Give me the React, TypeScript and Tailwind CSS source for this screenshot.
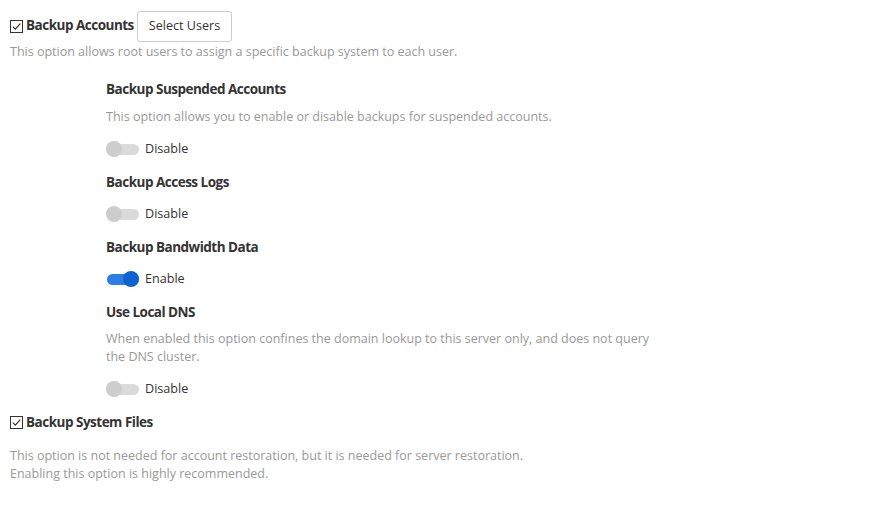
import React from "react";

const Check = () => (
  <svg width="13" height="13" viewBox="0 0 13 13" className="shrink-0">
    <rect x="0.5" y="0.5" width="12" height="12" fill="white" stroke="#333" strokeWidth="1" />
    <path d="M2.8 6.6 L5.3 9.1 L10.3 3.6" fill="none" stroke="#333" strokeWidth="1.2" />
  </svg>
);

const Toggle = ({ on, label }: { on: boolean; label: string }) => (
  <div className="flex items-center h-5 gap-[6px]">
    <div className="relative w-[33px] h-4 flex items-center">
      <div className={on ? "h-[11px] w-[32px] rounded-full bg-[#2a7ee6] ml-[1px]" : "h-[11px] w-[32px] rounded-full bg-[#dadada] ml-[1px]"} />
      <div
        className={
          on
            ? "absolute right-0 top-0 w-4 h-4 rounded-full bg-[#0d62cf]"
            : "absolute left-0 top-0 w-4 h-4 rounded-full bg-[#cdcdcd]"
        }
      />
    </div>
    <span className="text-[12.6px] text-[#333]">{label}</span>
  </div>
);

const Heading = ({ children }: { children: React.ReactNode }) => (
  <div className="text-[13.5px] leading-5 font-bold tracking-[-0.5px] text-[#333]">{children}</div>
);

const Desc = ({ children, className }: { children: React.ReactNode; className?: string }) => (
  <div className={"text-[12.5px] leading-[18px] text-[#999] " + (className ?? "")}>{children}</div>
);

export default function App() {
  return (
    <div className="bg-white min-h-[511px] w-[882px] pl-[10px] pt-[11px]" style={{ fontFamily: '"Open Sans", sans-serif' }}>
      <div className="flex items-center h-[31px]">
        <Check />
        <span className="ml-[3px] text-[13.5px] font-bold tracking-[-0.5px] text-[#333] -mt-[3px]">Backup Accounts</span>
        <button className="ml-[3px] h-[31px] px-[11px] border border-[#ccc] rounded-[3px] text-[12.6px] text-[#333] bg-white">
          Select Users
        </button>
      </div>
      <Desc className="mt-[1px]">This option allows root users to assign a specific backup system to each user.</Desc>

      <div className="pl-[96px] pt-[18px] w-[660px]">
        <Heading>Backup Suspended Accounts</Heading>
        <Desc className="mt-[9px]">This option allows you to enable or disable backups for suspended accounts.</Desc>
        <div className="mt-[13px]">
          <Toggle on={false} label="Disable" />
        </div>

        <div className="mt-[13px]">
          <Heading>Backup Access Logs</Heading>
        </div>
        <div className="mt-3">
          <Toggle on={false} label="Disable" />
        </div>

        <div className="mt-[13px]">
          <Heading>Backup Bandwidth Data</Heading>
        </div>
        <div className="mt-3">
          <Toggle on={true} label="Enable" />
        </div>

        <div className="mt-[13px]">
          <Heading>Use Local DNS</Heading>
        </div>
        <Desc className="mt-[8px]">
          When enabled this option confines the domain lookup to this server only, and does not query the DNS cluster.
        </Desc>
        <div className="mt-[13px]">
          <Toggle on={false} label="Disable" />
        </div>
      </div>

      <div className="flex items-center h-5 mt-[13px]">
        <Check />
        <span className="ml-[3px] text-[13.5px] font-bold tracking-[-0.5px] text-[#333]">Backup System Files</span>
      </div>
      <Desc className="mt-[15px]">
        This option is not needed for account restoration, but it is needed for server restoration.
        <br />
        Enabling this option is highly recommended.
      </Desc>
    </div>
  );
}
